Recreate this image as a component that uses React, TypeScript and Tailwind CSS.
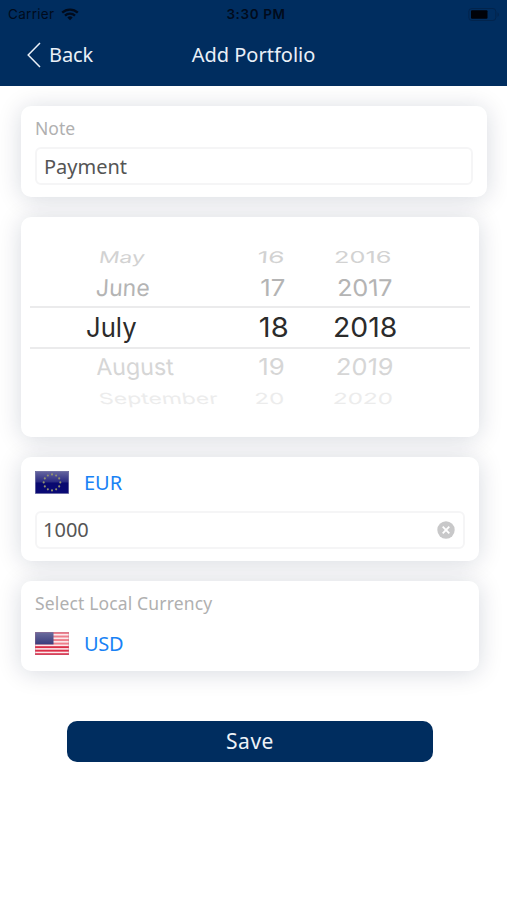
import { ReactNode, useState } from 'react';

interface PickerRow {
  month: string;
  day: string;
  year: string;
  row: string;
  monthClass: string;
  dayClass: string;
  yearClass: string;
}

const pickerRows: PickerRow[] = [
  {
    month: 'May',
    day: '16',
    year: '2016',
    row: 'h-[25px] text-[22px] text-[#d2d2d2]',
    monthClass: 'ml-[69px] scale-x-[1.04] scale-y-[0.73] -skew-x-6',
    dayClass: 'mr-[15px] scale-x-[1.2] scale-y-[0.73] -skew-x-3',
    yearClass: 'ml-[34px] scale-x-[1.15] scale-y-[0.73]',
  },
  {
    month: 'June',
    day: '17',
    year: '2017',
    row: 'h-[37px] pt-[2px] text-[23px] text-[#b4b4b4]',
    monthClass: 'ml-[66px] -skew-x-3',
    dayClass: 'mr-[15px] scale-x-[1.12]',
    yearClass: 'ml-[37px] scale-x-[1.1] skew-x-3',
  },
  {
    month: 'July',
    day: '18',
    year: '2018',
    row: 'h-[43px] text-[27px] text-[#2b2b2b] border-y-2 border-[#ebebec]',
    monthClass: 'ml-[56px] scale-x-[0.95]',
    dayClass: 'mr-[11px] scale-x-[1.08]',
    yearClass: 'ml-[33px] scale-x-[1.05]',
  },
  {
    month: 'August',
    day: '19',
    year: '2019',
    row: 'h-[37px] text-[23px] text-[#d6d6d6]',
    monthClass: 'ml-[66px] scale-x-[1.01] skew-x-3',
    dayClass: 'mr-[15px] scale-x-[1.12]',
    yearClass: 'ml-[36px] scale-x-[1.1] -skew-x-3',
  },
  {
    month: 'September',
    day: '20',
    year: '2020',
    row: 'h-[23px] text-[22px] text-[#ececec]',
    monthClass: 'ml-[69px] scale-x-[1.04] scale-y-[0.7] skew-x-6',
    dayClass: 'mr-[16px] scale-x-[1.1] scale-y-[0.7] skew-x-3',
    yearClass: 'ml-[33px] scale-x-[1.1] scale-y-[0.7] -skew-x-3',
  },
];

function Card({ className, children }: { className: string; children: ReactNode }) {
  return (
    <section className={`rounded-[10px] bg-white shadow-[0_2px_24px_rgba(0,25,65,0.16)] ${className}`}>
      {children}
    </section>
  );
}

function StatusBar() {
  return (
    <div className="flex h-7 items-center justify-between pl-2 pr-[7px] font-['Inter',sans-serif] text-[13.5px] text-[#010b1c]">
      <div className="flex w-[120px] items-center gap-[7px]">
        <span className="tracking-[0.3px]">Carrier</span>
        <svg width="18" height="13" viewBox="0 0 18 13" fill="none" stroke="currentColor" strokeWidth="2.3">
          <path d="M1.2 4.7a11.2 11.2 0 0 1 15.6 0" />
          <path d="M4 7.7a7.2 7.2 0 0 1 10 0" />
          <path d="M9 12.2 6.3 9.5a3.9 3.9 0 0 1 5.4 0z" fill="currentColor" stroke="none" />
        </svg>
      </div>
      <span className="ml-1 font-semibold tracking-[0.6px]">3:30 PM</span>
      <div className="flex w-[120px] justify-end">
        <svg width="32" height="13" viewBox="0 0 32 13">
          <rect x="0.8" y="0.5" width="27" height="12" rx="3" fill="none" stroke="#02244c" />
          <rect x="3" y="2.2" width="16.5" height="8.6" rx="1" fill="#000208" />
          <path d="M29.5 4.2c1.8.8 1.8 3.8 0 4.6z" fill="#02244c" />
        </svg>
      </div>
    </div>
  );
}

function EuFlag() {
  return (
    <svg width="34" height="23" viewBox="0 0 34 23">
      <defs>
        <linearGradient id="eu" x1="0" y1="0" x2="0" y2="1">
          <stop offset="0" stopColor="#65659f" />
          <stop offset="0.47" stopColor="#2b2b82" />
          <stop offset="0.53" stopColor="#09096f" />
          <stop offset="1" stopColor="#090975" />
        </linearGradient>
      </defs>
      <rect x="0.3" y="0.3" width="33.4" height="22.2" fill="url(#eu)" stroke="#606098" strokeWidth="0.6" />
      {Array.from({ length: 12 }, (_, i) => (
        <circle
          key={i}
          cx={17 + 8.3 * Math.sin((i * Math.PI) / 6)}
          cy={11.4 - 8 * Math.cos((i * Math.PI) / 6)}
          r="1.05"
          fill="#92926f"
        />
      ))}
    </svg>
  );
}

function UsFlag() {
  return (
    <svg width="34" height="23" viewBox="0 0 34 23">
      <defs>
        <linearGradient id="canton" x1="0" y1="0" x2="0" y2="1">
          <stop offset="0" stopColor="#6c6d9e" />
          <stop offset="1" stopColor="#3a3c7c" />
        </linearGradient>
      </defs>
      <rect width="34" height="23" fill="#fbe9ec" />
      {Array.from({ length: 7 }, (_, i) => (
        <rect key={i} y={i * 3.54} width="34" height="1.95" fill={i < 4 ? '#ee7f8c' : '#dc2f48'} />
      ))}
      <rect width="18.5" height="12.4" fill="url(#canton)" />
      <rect x="0.25" y="0.25" width="33.5" height="22.5" fill="none" stroke="#b5728c" strokeWidth="0.5" opacity="0.6" />
    </svg>
  );
}

export default function App() {
  const [note, setNote] = useState('Payment');
  const [amount, setAmount] = useState('1000');

  return (
    <div className="h-[900px] w-[507px] overflow-hidden bg-white font-['Noto_Sans',sans-serif]">
      <header className="h-[86px] bg-[#002d5f]">
        <StatusBar />
        <div className="grid h-[54px] grid-cols-3 items-center text-xl text-[#eaf0f7]">
          <button className="flex items-center gap-2 pl-[27px]">
            <svg width="14" height="26" viewBox="0 0 14 26" fill="none" stroke="currentColor" strokeWidth="1.5">
              <path d="M13 1 1.2 13 13 25" />
            </svg>
            <span className="tracking-[-0.1px]">Back</span>
          </button>
          <h1 className="whitespace-nowrap text-center">Add Portfolio</h1>
        </div>
      </header>

      <main className="flex flex-col gap-5 pl-[21px] pr-7 pt-5">
        <Card className="-mr-2 h-[91px] px-3.5 pt-[11px]">
          <label className="block text-[17.5px] leading-[22px] text-[#b0b0b0]">Note</label>
          <input
            value={note}
            onChange={(e) => setNote(e.target.value)}
            className="mt-2 block h-[38px] w-full rounded-md border-2 border-[#f5f5f6] px-[7px] text-xl text-[#555] outline-none"
          />
        </Card>

        <Card className="h-[220px] px-[9px] pt-[27px] font-['Inter',sans-serif]">
          {pickerRows.map((item) => (
            <div key={item.year} className={`flex items-center whitespace-nowrap leading-none ${item.row}`}>
              <div className="flex w-[190px]">
                <span className={`origin-left ${item.monthClass}`}>{item.month}</span>
              </div>
              <div className="flex w-[80px] justify-end">
                <span className={`origin-right ${item.dayClass}`}>{item.day}</span>
              </div>
              <div className="flex">
                <span className={`origin-left ${item.yearClass}`}>{item.year}</span>
              </div>
            </div>
          ))}
        </Card>

        <Card className="h-[104px] px-3.5 pt-3">
          <button className="flex h-[26px] items-center gap-[15px]">
            <EuFlag />
            <span className="pt-px text-xl text-[#1982f5]">EUR</span>
          </button>
          <div className="mt-4 flex h-[38px] items-center rounded-md border-2 border-[#f5f5f6] pl-1.5 pr-2">
            <input
              value={amount}
              onChange={(e) => setAmount(e.target.value)}
              className="min-w-0 flex-1 text-xl text-[#555] outline-none"
            />
            <button onClick={() => setAmount('')}>
              <svg width="18" height="18" viewBox="0 0 18 18">
                <circle cx="9" cy="9" r="8.7" fill="#c8c8c9" />
                <path d="m5.7 5.7 6.6 6.6m0-6.6-6.6 6.6" stroke="white" strokeWidth="1.8" />
              </svg>
            </button>
          </div>
        </Card>

        <Card className="h-[90px] px-3.5 pt-[11px]">
          <p className="text-[17.5px] leading-[22px] tracking-[0.15px] text-[#b0b0b0]">Select Local Currency</p>
          <button className="mt-4 flex h-[26px] items-center gap-[15px]">
            <UsFlag />
            <span className="pt-px text-xl tracking-[-0.3px] text-[#1982f5]">USD</span>
          </button>
        </Card>

        <button className="ml-[46px] mt-[30px] h-[41px] w-[366px] rounded-[10px] bg-[#002d5f] pt-px text-[21px] tracking-[0.5px] text-[#eef3f8]">
          Save
        </button>
      </main>
    </div>
  );
}
